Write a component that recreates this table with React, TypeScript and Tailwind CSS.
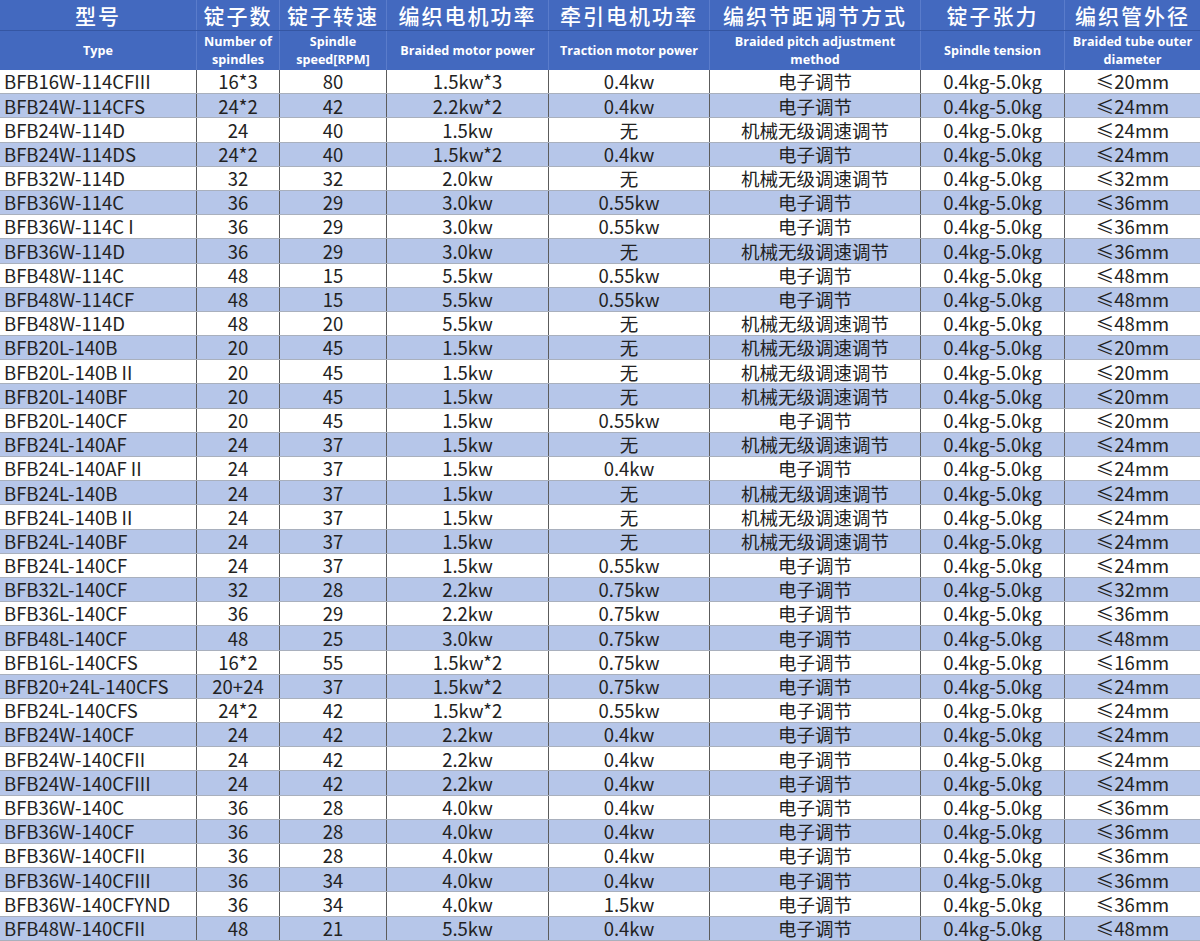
import React from "react";

const E = "电子调节";
const M = "机械无级调速调节";
const N = "无";

const rows: string[][] = [
  ["BFB16W-114CFIII", "16*3", "80", "1.5kw*3", "0.4kw", E, "≤20mm"],
  ["BFB24W-114CFS", "24*2", "42", "2.2kw*2", "0.4kw", E, "≤24mm"],
  ["BFB24W-114D", "24", "40", "1.5kw", N, M, "≤24mm"],
  ["BFB24W-114DS", "24*2", "40", "1.5kw*2", "0.4kw", E, "≤24mm"],
  ["BFB32W-114D", "32", "32", "2.0kw", N, M, "≤32mm"],
  ["BFB36W-114C", "36", "29", "3.0kw", "0.55kw", E, "≤36mm"],
  ["BFB36W-114C I", "36", "29", "3.0kw", "0.55kw", E, "≤36mm"],
  ["BFB36W-114D", "36", "29", "3.0kw", N, M, "≤36mm"],
  ["BFB48W-114C", "48", "15", "5.5kw", "0.55kw", E, "≤48mm"],
  ["BFB48W-114CF", "48", "15", "5.5kw", "0.55kw", E, "≤48mm"],
  ["BFB48W-114D", "48", "20", "5.5kw", N, M, "≤48mm"],
  ["BFB20L-140B", "20", "45", "1.5kw", N, M, "≤20mm"],
  ["BFB20L-140B II", "20", "45", "1.5kw", N, M, "≤20mm"],
  ["BFB20L-140BF", "20", "45", "1.5kw", N, M, "≤20mm"],
  ["BFB20L-140CF", "20", "45", "1.5kw", "0.55kw", E, "≤20mm"],
  ["BFB24L-140AF", "24", "37", "1.5kw", N, M, "≤24mm"],
  ["BFB24L-140AF II", "24", "37", "1.5kw", "0.4kw", E, "≤24mm"],
  ["BFB24L-140B", "24", "37", "1.5kw", N, M, "≤24mm"],
  ["BFB24L-140B II", "24", "37", "1.5kw", N, M, "≤24mm"],
  ["BFB24L-140BF", "24", "37", "1.5kw", N, M, "≤24mm"],
  ["BFB24L-140CF", "24", "37", "1.5kw", "0.55kw", E, "≤24mm"],
  ["BFB32L-140CF", "32", "28", "2.2kw", "0.75kw", E, "≤32mm"],
  ["BFB36L-140CF", "36", "29", "2.2kw", "0.75kw", E, "≤36mm"],
  ["BFB48L-140CF", "48", "25", "3.0kw", "0.75kw", E, "≤48mm"],
  ["BFB16L-140CFS", "16*2", "55", "1.5kw*2", "0.75kw", E, "≤16mm"],
  ["BFB20+24L-140CFS", "20+24", "37", "1.5kw*2", "0.75kw", E, "≤24mm"],
  ["BFB24L-140CFS", "24*2", "42", "1.5kw*2", "0.55kw", E, "≤24mm"],
  ["BFB24W-140CF", "24", "42", "2.2kw", "0.4kw", E, "≤24mm"],
  ["BFB24W-140CFII", "24", "42", "2.2kw", "0.4kw", E, "≤24mm"],
  ["BFB24W-140CFIII", "24", "42", "2.2kw", "0.4kw", E, "≤24mm"],
  ["BFB36W-140C", "36", "28", "4.0kw", "0.4kw", E, "≤36mm"],
  ["BFB36W-140CF", "36", "28", "4.0kw", "0.4kw", E, "≤36mm"],
  ["BFB36W-140CFII", "36", "28", "4.0kw", "0.4kw", E, "≤36mm"],
  ["BFB36W-140CFIII", "36", "34", "4.0kw", "0.4kw", E, "≤36mm"],
  ["BFB36W-140CFYND", "36", "34", "4.0kw", "1.5kw", E, "≤36mm"],
  ["BFB48W-140CFII", "48", "21", "5.5kw", "0.4kw", E, "≤48mm"],
];

const zh = ["型号", "锭子数", "锭子转速", "编织电机功率", "牵引电机功率", "编织节距调节方式", "锭子张力", "编织管外径"];
const en = [
  "Type",
  "Number of spindles",
  "Spindle speed[RPM]",
  "Braided motor power",
  "Traction motor power",
  "Braided pitch adjustment method",
  "Spindle tension",
  "Braided tube outer diameter",
];

const cols = "grid grid-cols-[197px_83px_107px_162px_161px_211px_144px_135px]";
const dataFont = { fontFamily: '"Noto Sans CJK SC", "Noto Sans", sans-serif' };

export default function App() {
  return (
    <div className="w-[1200px] h-[941px] overflow-hidden bg-white" style={dataFont}>
      <div className={`${cols} h-[31px] bg-[#4369bf] border-b border-[#3556a3]`}>
        {zh.map((t, i) => (
          <div
            key={i}
            className={`flex items-center justify-center text-white text-[21px] leading-none tracking-[2px] font-medium ${i < 7 ? "border-r border-[#5a7ccb]" : ""}`}
          >
            {t}
          </div>
        ))}
      </div>
      <div className={`${cols} h-[39px] bg-[#4369bf]`}>
        {en.map((t, i) => (
          <div
            key={i}
            className={`flex items-center justify-center text-center text-white text-[12.6px] leading-[18px] font-bold px-1 ${i < 7 ? "border-r border-[#5a7ccb]" : ""}`}
            style={{ fontFamily: '"Open Sans", sans-serif' }}
          >
            {t}
          </div>
        ))}
      </div>
      {rows.map((r, ri) => {
        const cells = [r[0], r[1], r[2], r[3], r[4], r[5], "0.4kg-5.0kg", r[6]];
        return (
          <div
            key={ri}
            className={`${cols} h-[24.2px] ${ri % 2 === 1 ? "bg-[#b6c6e9]" : "bg-white"} border-b border-[#a9b0bd]`}
          >
            {cells.map((c, ci) => (
              <div
                key={ci}
                className={`flex items-center text-[18.5px] leading-none text-[#222] whitespace-nowrap ${ci === 0 ? "justify-start pl-[4px]" : "justify-center"} ${ci < 7 ? "border-r border-[#5c5c5c]" : ""}`}
              >
                {c}
              </div>
            ))}
          </div>
        );
      })}
    </div>
  );
}
